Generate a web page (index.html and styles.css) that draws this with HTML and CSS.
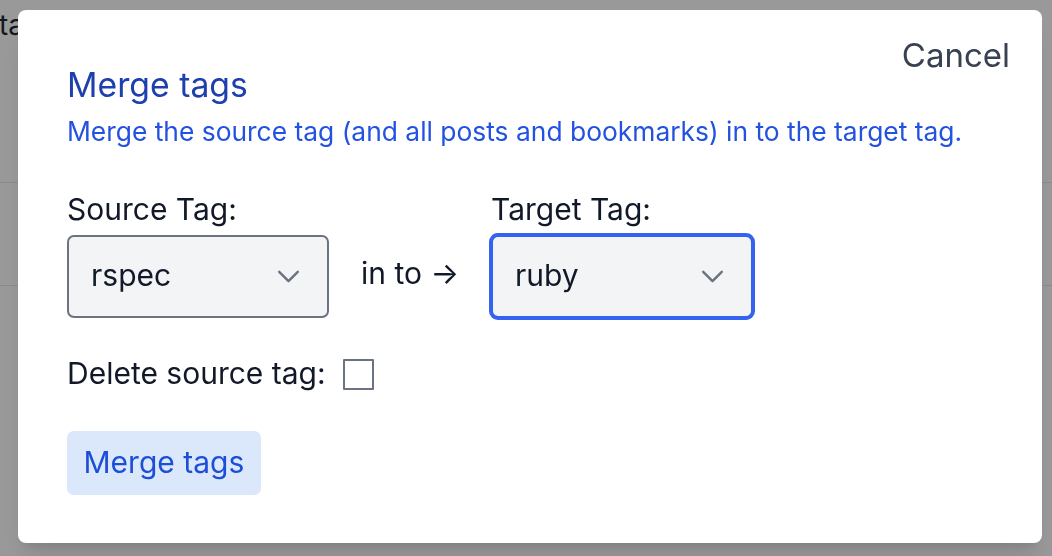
FILE: index.html
```html
<!DOCTYPE html>
<html lang="en">
<head>
<meta charset="utf-8">
<title>Merge tags</title>
<link rel="stylesheet" href="styles.css">
</head>
<body>
<div class="page">
  <div class="page-heading">tags</div>
  <div class="page-rule rule-one"></div>
  <div class="page-rule rule-two"></div>
</div>
<div class="overlay">
  <div class="modal">
    <button class="cancel" type="button">Cancel</button>
    <h2 class="title">Merge tags</h2>
    <p class="subtitle">Merge the source tag (and all posts and bookmarks) in to the target tag.</p>
    <div class="tag-row">
      <div class="field">
        <span class="field-label">Source Tag:</span>
        <div class="select">
          <span class="select-value">rspec</span>
          <svg class="chevron" viewBox="0 0 24 14" width="23" height="13"><path d="M2 2 L12 12 L22 2" fill="none" stroke="#6b7280" stroke-width="2.6" stroke-linecap="round" stroke-linejoin="round"/></svg>
        </div>
      </div>
      <span class="into">in to →</span>
      <div class="field">
        <span class="field-label">Target Tag:</span>
        <div class="select select-focused">
          <span class="select-value">ruby</span>
          <svg class="chevron" viewBox="0 0 24 14" width="23" height="13"><path d="M2 2 L12 12 L22 2" fill="none" stroke="#6b7280" stroke-width="2.6" stroke-linecap="round" stroke-linejoin="round"/></svg>
        </div>
      </div>
    </div>
    <div class="delete-row">
      <span class="delete-label">Delete source tag:</span>
      <span class="checkbox"></span>
    </div>
    <button class="merge-btn" type="button">Merge tags</button>
  </div>
</div>
</body>
</html>
```

FILE: styles.css
```css
* { box-sizing: border-box; margin: 0; padding: 0; }
html, body { width: 100%; height: 100%; }
body {
  font-family: Inter, "Noto Sans", sans-serif;
  background: #ffffff;
  overflow: hidden;
  position: relative;
  color: #111827;
}
.page { padding-top: 8px; }
.page-heading {
  font-size: 28px;
  line-height: 34px;
  color: #1f2937;
  margin-left: -1px;
}
.page-rule { border-top: 1px solid #e5e7eb; }
.rule-one { margin-top: 140px; }
.rule-two { margin-top: 102px; }

.overlay {
  position: fixed;
  inset: 0;
  background: rgba(0, 0, 0, 0.4);
  padding: 10px 10px 0 18px;
}
.modal {
  position: relative;
  background: #ffffff;
  border-radius: 8px;
  padding: 55px 34px 48px 49px;
  box-shadow: 0 20px 25px -5px rgba(0,0,0,0.1), 0 8px 10px -6px rgba(0,0,0,0.1);
}
.cancel {
  position: absolute;
  top: 26px;
  right: 32px;
  background: none;
  border: none;
  font-family: inherit;
  font-size: 33px;
  line-height: 1.2;
  color: #374151;
}
.title {
  font-size: 33.75px;
  line-height: 40px;
  font-weight: 400;
  color: #1e3fae;
}
.subtitle {
  margin-top: 8px;
  font-size: 26.4px;
  line-height: 37.5px;
  color: #2452e0;
}
.tag-row {
  margin-top: 40px;
  display: flex;
  align-items: flex-end;
  column-gap: 32px;
}
.field {
  display: flex;
  flex-direction: column;
  row-gap: 8px;
}
.field-label {
  font-size: 30px;
  line-height: 36px;
}
.select {
  width: 262px;
  height: 83px;
  background: #f3f4f6;
  border: 2px solid #6b7280;
  border-radius: 7px;
  display: flex;
  align-items: center;
  justify-content: space-between;
  padding: 0 27.5px 3px 22px;
}
.select-focused {
  border-color: #3563f0;
  box-shadow: 0 0 0 2px #3563f0;
}
.select-value {
  font-size: 30px;
  line-height: 36px;
}
.chevron { display: block; margin-top: 3px; }
.into {
  height: 83px;
  display: flex;
  align-items: center;
  padding-bottom: 7px;
  font-size: 30px;
  line-height: 36px;
}
.delete-row {
  margin-top: 37px;
  display: flex;
  align-items: flex-start;
  column-gap: 17px;
}
.delete-label {
  font-size: 30px;
  line-height: 36px;
}
.checkbox {
  margin-top: 4px;
  width: 31px;
  height: 31px;
  border: 2px solid #6b7280;
  border-radius: 1px;
  background: #ffffff;
}
.merge-btn {
  display: block;
  margin-top: 40px;
  height: 64px;
  padding: 0 16.5px 2px;
  border: none;
  border-radius: 7px;
  background: #dbe8fc;
  color: #1d4ed8;
  font-family: inherit;
  font-size: 30px;
  line-height: 36px;
}
```
